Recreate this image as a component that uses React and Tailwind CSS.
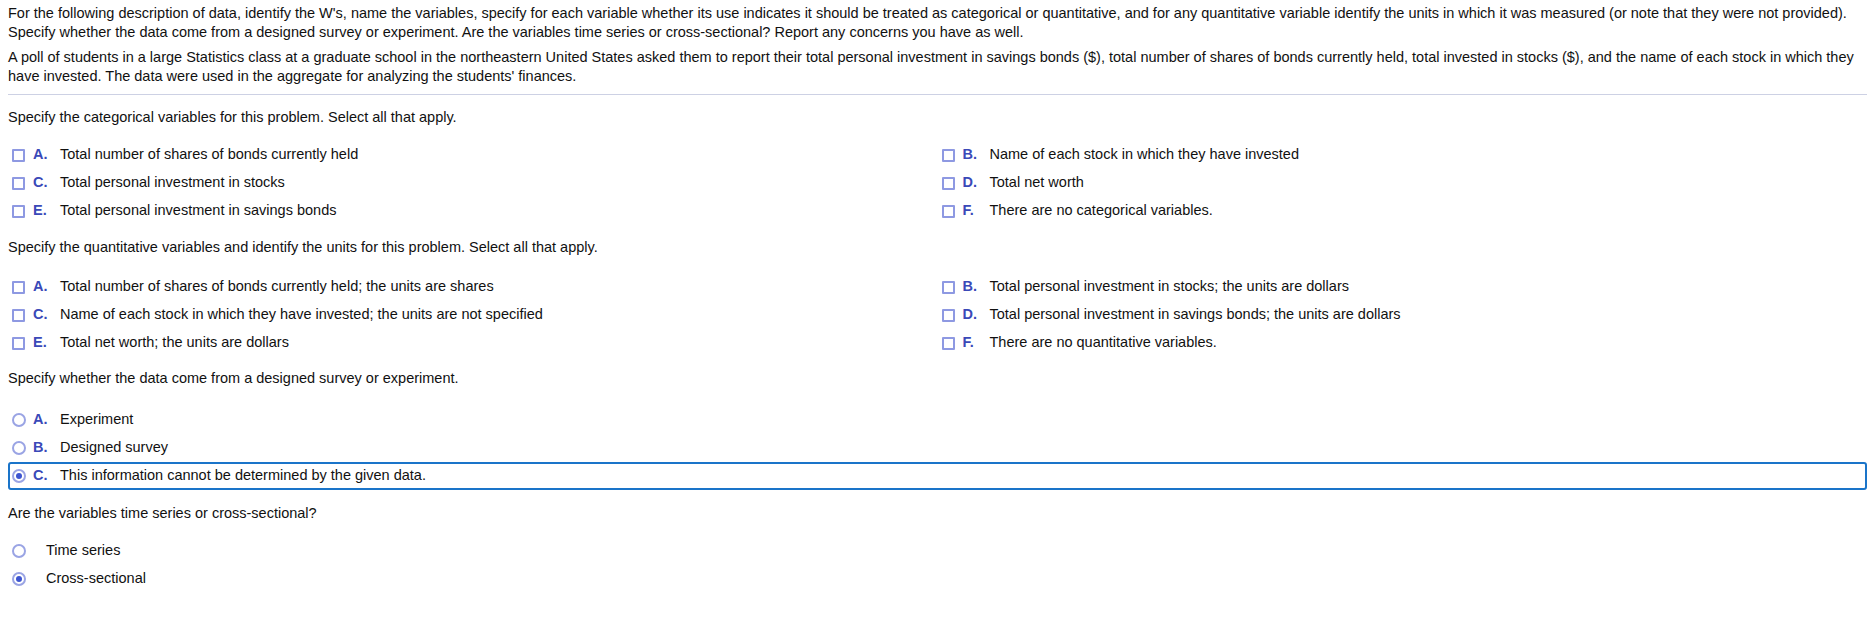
import React from 'react';

const CATEGORICAL = [
  ['A.', 'Total number of shares of bonds currently held'],
  ['B.', 'Name of each stock in which they have invested'],
  ['C.', 'Total personal investment in stocks'],
  ['D.', 'Total net worth'],
  ['E.', 'Total personal investment in savings bonds'],
  ['F.', 'There are no categorical variables.'],
];

const QUANTITATIVE = [
  ['A.', 'Total number of shares of bonds currently held; the units are shares'],
  ['B.', 'Total personal investment in stocks; the units are dollars'],
  ['C.', 'Name of each stock in which they have invested; the units are not specified'],
  ['D.', 'Total personal investment in savings bonds; the units are dollars'],
  ['E.', 'Total net worth; the units are dollars'],
  ['F.', 'There are no quantitative variables.'],
];

const SOURCE = [
  ['A.', 'Experiment'],
  ['B.', 'Designed survey'],
  ['C.', 'This information cannot be determined by the given data.'],
];

function Checkbox() {
  return <span className="inline-block w-[13px] h-[13px] border-2 border-[#8e99e2] rounded-[1px] bg-white shrink-0" />;
}

function Radio({ checked }) {
  return (
    <span className="inline-flex items-center justify-center w-[14px] h-[14px] rounded-full border-2 border-[#9aa4e4] bg-white shrink-0">
      {checked && <span className="w-[6px] h-[6px] rounded-full bg-[#3d55d0]" />}
    </span>
  );
}

function Letter({ children }) {
  return <span className="w-[27px] shrink-0 font-bold text-[#3a49b8]">{children}</span>;
}

function Question({ children, className = '' }) {
  return <p className={`leading-[19px] ${className}`}>{children}</p>;
}

function CheckGrid({ items, className = '' }) {
  return (
    <div className={`grid grid-cols-2 ${className}`}>
      {items.map(([letter, text]) => (
        <div key={letter + text} className="flex items-center h-[28px] pl-[4px]">
          <Checkbox />
          <span className="w-[8px] shrink-0" />
          <Letter>{letter}</Letter>
          <span>{text}</span>
        </div>
      ))}
    </div>
  );
}

export default function App() {
  return (
    <div className="min-h-[621px] bg-white px-2 pt-[4px] text-[14.5px] text-[#111] font-['Liberation_Sans',Arial,sans-serif]">
      <p className="leading-[19px]">
        For the following description of data, identify the W's, name the variables, specify for each variable whether its use indicates it should be treated as categorical or quantitative, and for any quantitative variable identify the units in which it was measured (or note that they were not provided). Specify whether the data come from a designed survey or experiment. Are the variables time series or cross-sectional? Report any concerns you have as well.
      </p>
      <p className="leading-[19px] mt-[6px]">
        A poll of students in a large Statistics class at a graduate school in the northeastern United States asked them to report their total personal investment in savings bonds ($), total number of shares of bonds currently held, total invested in stocks ($), and the name of each stock in which they have invested. The data were used in the aggregate for analyzing the students' finances.
      </p>
      <div className="h-px bg-[#cdd1e4] mt-[8px]" />

      <Question className="mt-[13px]">Specify the categorical variables for this problem. Select all that apply.</Question>
      <CheckGrid items={CATEGORICAL} className="mt-[14px]" />

      <Question className="mt-[13px]">Specify the quantitative variables and identify the units for this problem. Select all that apply.</Question>
      <CheckGrid items={QUANTITATIVE} className="mt-[16px]" />

      <Question className="mt-[12px]">Specify whether the data come from a designed survey or experiment.</Question>
      <div className="mt-[18px]">
        {SOURCE.map(([letter, text]) => {
          const checked = letter === 'C.';
          return (
            <div
              key={letter}
              className={`flex items-center h-[28px] ${checked ? 'border-2 border-[#1a74c9] rounded-[3px] pl-[2px]' : 'pl-[4px]'}`}
            >
              <Radio checked={checked} />
              <span className="w-[7px] shrink-0" />
              <Letter>{letter}</Letter>
              <span>{text}</span>
            </div>
          );
        })}
      </div>

      <Question className="mt-[14px]">Are the variables time series or cross-sectional?</Question>
      <div className="mt-[14px]">
        {[['Time series', false], ['Cross-sectional', true]].map(([text, checked]) => (
          <div key={text} className="flex items-center h-[28px] pl-[4px]">
            <Radio checked={checked} />
            <span className="w-[20px] shrink-0" />
            <span>{text}</span>
          </div>
        ))}
      </div>
    </div>
  );
}
